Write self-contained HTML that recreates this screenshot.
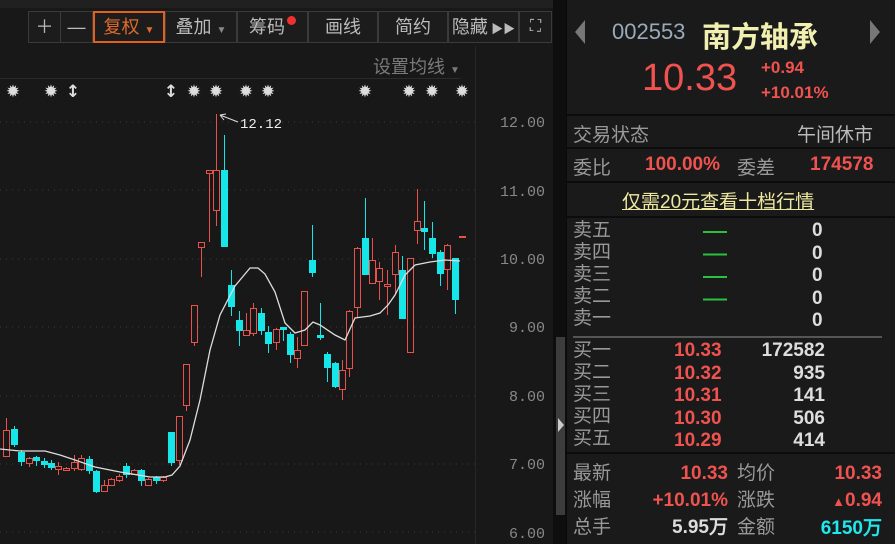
<!DOCTYPE html>
<html><head><meta charset="utf-8"><style>
*{margin:0;padding:0;box-sizing:border-box}
body{width:895px;height:544px;background:#181818;overflow:hidden;position:relative;font-family:"Liberation Sans","Noto Sans CJK SC",sans-serif;color:#aaa}
.a{position:absolute;white-space:nowrap}
.tb{position:absolute;top:11px;height:32px;border:1px solid #3a3a3a;background:#1c1c1c;color:#bbb;font-size:18px;text-align:center;line-height:30px}
.r{color:#f0524f}.w{color:#ddd}.g{color:#9a9a9a}
.lbl{font-size:19px;color:#999}
.ob{position:absolute;left:573px;font-size:19px;line-height:22px;color:#999}
.num{font-family:"Liberation Sans",sans-serif;font-weight:bold;font-size:19px}
</style></head><body>
<div class="a" style="left:0;top:0;width:566px;height:8px;background:#202020"></div>
<div class="tb" style="left:28px;width:33px">＋</div>
<div class="tb" style="left:60px;width:33px">—</div>
<div class="tb" style="left:93px;width:72px;border:2px solid #e0601c;color:#e06a2a;line-height:28px">复权 <span style="font-size:10px">▼</span></div>
<div class="tb" style="left:165px;width:72px">叠加 <span style="font-size:10px;color:#888">▼</span></div>
<div class="tb" style="left:237px;width:71px">筹码<span style="display:inline-block;width:9px;height:9px;border-radius:50%;background:#f03030;vertical-align:8px;margin-left:2px"></span></div>
<div class="tb" style="left:308px;width:70px">画线</div>
<div class="tb" style="left:378px;width:70px">简约</div>
<div class="tb" style="left:448px;width:71px">隐藏<span style="font-size:12px"> ▶▶</span></div>
<div class="tb" style="left:519px;width:33px;font-size:16px">⛶</div>
<div class="a g" style="left:373px;top:53px;font-size:18px;color:#7a7a7a">设置均线 <span style="font-size:10px">▼</span></div>
<div class="a" style="left:0;top:78px;width:460px;height:1px;background:#2a2a2a"></div>
<div class="a" style="left:553px;top:0;width:13px;height:544px;background:#0e0e0e"></div>
<div class="a" style="left:556px;top:337px;width:9px;height:178px;background:#3c3c3c"></div>
<div class="a" style="left:558px;top:418px;width:0;height:0;border-left:6px solid #ccc;border-top:7px solid transparent;border-bottom:7px solid transparent"></div>
<svg class="a" style="left:0;top:0" width="553" height="544">
<g stroke="#3a3a3a" stroke-dasharray="1 5">
<line x1="0" y1="122" x2="475" y2="122"/><line x1="0" y1="190" x2="475" y2="190"/><line x1="0" y1="259" x2="475" y2="259"/><line x1="0" y1="327" x2="475" y2="327"/><line x1="0" y1="396" x2="475" y2="396"/><line x1="0" y1="464" x2="475" y2="464"/><line x1="0" y1="532" x2="475" y2="532"/></g>
<line x1="475.5" y1="46" x2="475.5" y2="544" stroke="#262626"/>
<g font-family="Liberation Mono,monospace" font-size="15" fill="#888" text-anchor="end">
<text x="545" y="127">12.00</text><text x="545" y="196">11.00</text><text x="545" y="264">10.00</text><text x="545" y="332">9.00</text><text x="545" y="401">8.00</text><text x="545" y="469">7.00</text><text x="545" y="538">6.00</text></g>
<g fill="#ddd" font-size="17" text-anchor="middle" font-family="DejaVu Sans,sans-serif" font-weight="bold">
<text x="13" y="97">✹</text><text x="51" y="97">✹</text><text x="73" y="97">↕</text><text x="171" y="97">↕</text><text x="194" y="97">✹</text><text x="216" y="97">✹</text><text x="246" y="97">✹</text><text x="268" y="97">✹</text><text x="365" y="97">✹</text><text x="409" y="97">✹</text><text x="432" y="97">✹</text><text x="462" y="97">✹</text></g>
<g id="c"></g>
<polyline fill="none" stroke="#ddd" stroke-width="1.3" points="0,449 20,451 45,451 60,455 75,460 95,467 120,472 150,477 165,477 172,475 180,466 190,440 200,400 210,350 220,315 235,286 250,268 258,268 265,274 275,292 285,323 295,333 305,330 313,322 320,325 335,335 345,340 355,318 370,316 380,313 388,305 395,295 405,275 415,265 430,262 445,260 460,261"/>
<path d="M220,115 L238,122 M220,115 l4,5 M220,115 l6,-1" stroke="#ddd" fill="none"/>
<text x="240" y="128" fill="#eee" font-size="14" font-family="Liberation Mono,monospace">12.12</text>
</svg>
<script>
var d=[[6,'r',418,457,430,456],[14,'c',426,447,429,445],[21,'c',450,466,452,462],[29,'r',457,467,458,463],[36,'c',456,466,457,461],[44,'c',458,468,461,465],[51,'c',460,470,463,468],[58,'r',462,475,466,469],[66,'r',467,471,468,470],[74,'r',455,471,462,468],[81,'r',455,471,458,469],[89,'c',456,474,459,471],[96,'c',470,493,471,492],[104,'r',480,492,485,491],[111,'r',478,486,479,485],[119,'r',474,482,476,480],[126,'c',463,478,466,475],[134,'r',469,475,470,474],[141,'c',469,486,470,481],[148,'r',478,486,479,485],[156,'c',476,484,477,481],[163,'r',476,482,477,480],[171,'c',432,466,432,463],[179,'r',416,465,416,460],[186,'r',364,411,364,405],[194,'r',305,346,305,342],[201,'r',242,277,242,247],[209,'r',170,242,170,173],[216,'r',114,226,170,210],[224,'c',135,247,170,247],[231,'c',270,316,285,307],[239,'c',311,346,320,331],[246,'r',313,336,330,335],[253,'r',303,336,308,333],[261,'c',308,335,313,331],[268,'c',326,353,332,344],[276,'r',328,350,329,342],[283,'c',327,341,327,330],[290,'c',332,363,334,355],[297,'r',337,368,350,358],[304,'r',291,345,291,345],[312,'c',225,277,260,273],[320,'c',303,340,335,338],[327,'c',352,382,354,368],[335,'c',362,388,363,387],[342,'r',360,400,370,389],[349,'r',310,377,311,368],[357,'r',247,317,248,307],[365,'c',198,275,238,275],[372,'r',238,283,260,283],[379,'r',262,300,268,281],[387,'r',270,315,284,286],[395,'r',245,294,252,274],[402,'c',256,318,270,319],[410,'r',258,352,258,352],[417,'r',189,244,221,230],[424,'c',201,250,228,232],[432,'c',222,258,238,254],[440,'c',250,286,252,274],[447,'r',244,290,245,269],[455,'c',258,314,258,300],[462,'r',236,237,236,237]];
var s='';d.forEach(function(k){var x=k[0],col=k[1]=='r'?'#e8514c':'#16e6e8';s+='<line x1="'+(x+.5)+'" y1="'+k[2]+'" x2="'+(x+.5)+'" y2="'+k[3]+'" stroke="'+col+'"/>';if(k[1]=='r')s+='<rect x="'+(x-2.5)+'" y="'+(k[4]+.5)+'" width="6" height="'+Math.max(1,k[5]-k[4])+'" fill="#181818" stroke="'+col+'"/>';else s+='<rect x="'+(x-3)+'" y="'+k[4]+'" width="7" height="'+Math.max(2,k[5]-k[4])+'" fill="'+col+'"/>';});
document.getElementById('c').innerHTML=s;
</script>
<div class="a" style="left:566px;top:0;width:329px;height:544px;background:#1a1a1a;border-left:1px solid #0a0a0a"></div>
<div class="a" style="left:575px;top:20px;width:0;height:0;border-right:10px solid #777;border-top:12px solid transparent;border-bottom:12px solid transparent"></div>
<div class="a" style="left:870px;top:20px;width:0;height:0;border-left:10px solid #777;border-top:12px solid transparent;border-bottom:12px solid transparent"></div>
<div class="a" style="left:612px;top:19px;font-size:22px;color:#9ab">002553</div>
<div class="a" style="left:702px;top:14px;font-size:29px;font-weight:bold;color:#f2f0b0">南方轴承</div>
<div class="a" style="left:642px;top:57px;font-size:38px;color:#f0524f">10.33</div>
<div class="a num r" style="left:761px;top:58px;font-size:17px">+0.94</div>
<div class="a num r" style="left:761px;top:83px;font-size:17px">+10.01%</div>
<div class="a" style="left:567px;top:114px;width:328px;height:2px;background:#0c0c0c"></div>
<div class="a lbl" style="left:573px;top:120px">交易状态</div>
<div class="a" style="left:797px;top:120px;font-size:19px;color:#bbb">午间休市</div>
<div class="a" style="left:567px;top:147px;width:328px;height:2px;background:#0c0c0c"></div>
<div class="a lbl" style="left:573px;top:153px">委比</div>
<div class="a num r" style="left:645px;top:154px">100.00%</div>
<div class="a lbl" style="left:737px;top:153px">委差</div>
<div class="a num r" style="left:810px;top:154px">174578</div>
<div class="a" style="left:567px;top:181px;width:328px;height:2px;background:#0c0c0c"></div>
<div class="a" style="left:622px;top:187px;font-size:19px;color:#eee8a0;text-decoration:underline">仅需20元查看十档行情</div>
<div class="a" style="left:567px;top:216px;width:328px;height:2px;background:#0c0c0c"></div>
<div class="ob" style="top:220px">卖五<br>卖四<br>卖三<br>卖二<br>卖一</div>
<div class="a" style="left:703px;top:231px;width:24px;height:89px;background:repeating-linear-gradient(#1a1a1a 0 0px,#2ac040 0 2px,#1a1a1a 2px 22.5px)"></div>
<div class="a num w" style="left:812px;top:220px;line-height:22.5px;text-align:right">0<br>0<br>0<br>0<br>0</div>
<div class="a" style="left:573px;top:336px;width:309px;height:2px;background:#555"></div>
<div class="ob" style="top:340px">买一<br>买二<br>买三<br>买四<br>买五</div>
<div class="a num r" style="left:674px;top:340px;line-height:22.5px">10.33<br>10.32<br>10.31<br>10.30<br>10.29</div>
<div class="a num w" style="left:745px;top:340px;width:80px;line-height:22.5px;text-align:right">172582<br>935<br>141<br>506<br>414</div>
<div class="a" style="left:567px;top:452px;width:328px;height:2px;background:#0c0c0c"></div>
<div class="ob" style="top:460px;line-height:27px">最新<br>涨幅<br>总手</div>
<div class="a num" style="left:600px;top:460px;width:128px;line-height:27px;text-align:right"><span class="r">10.33</span><br><span class="r">+10.01%</span><br><span class="w">5.95万</span></div>
<div class="a lbl" style="left:737px;top:460px;line-height:27px">均价<br>涨跌<br>金额</div>
<div class="a num" style="left:770px;top:460px;width:112px;line-height:27px;text-align:right"><span class="r">10.33</span><br><span class="r"><span style="font-size:13px">▲</span>0.94</span><br><span style="color:#1ee8ee">6150万</span></div>
</body></html>
